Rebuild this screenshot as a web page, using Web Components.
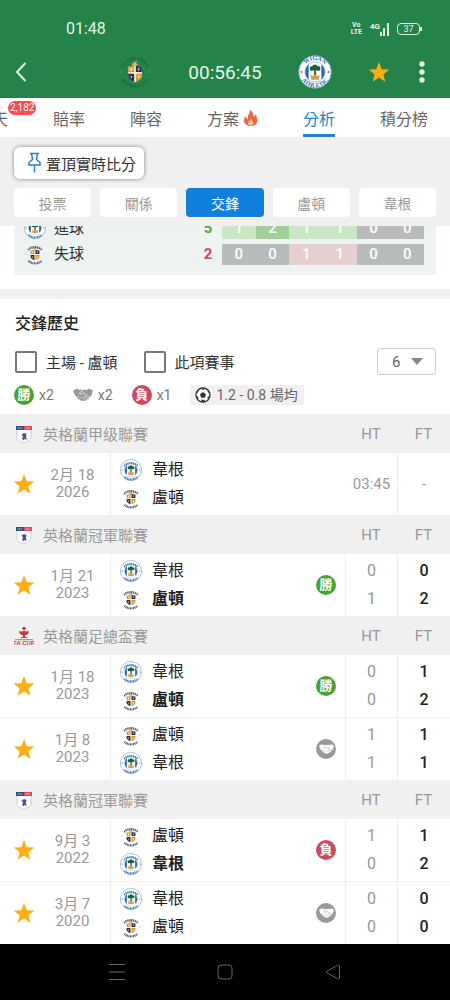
<!DOCTYPE html>
<html lang="zh-Hant">
<head>
<meta charset="utf-8">
<meta name="viewport" content="width=device-width, initial-scale=1">
<title>交鋒歷史</title>
<style>
  body {
    margin: 0;
    min-height: 100vh;
    display: flex;
    flex-direction: column;
    background: #fff;
    color: #333;
    font-family: Roboto, "Noto Sans CJK TC", sans-serif;
    font-size: 15px;
  }
</style>
</head>
<body>
  <status-bar time="01:48" battery="37"></status-bar>
  <match-bar clock="00:56:45"></match-bar>
  <tab-bar>
    <tab-item badge="2,182">天</tab-item>
    <tab-item>賠率</tab-item>
    <tab-item>陣容</tab-item>
    <tab-item hot>方案</tab-item>
    <tab-item active>分析</tab-item>
    <tab-item>積分榜</tab-item>
  </tab-bar>
  <filter-panel>
    <pin-button slot="pin">置頂實時比分</pin-button>
    <filter-chip>投票</filter-chip>
    <filter-chip>關係</filter-chip>
    <filter-chip active>交鋒</filter-chip>
    <filter-chip>盧頓</filter-chip>
    <filter-chip>韋根</filter-chip>
  </filter-panel>
  <goal-stats></goal-stats>
  <history-filters></history-filters>
  <history-summary></history-summary>
  <match-history></match-history>
  <system-nav></system-nav>

<script>
'use strict';

const baseStyle = `
  :host, *, *::before, *::after { box-sizing: border-box; }
  button, select {
    margin: 0;
    padding: 0;
    border: none;
    background: none;
    color: inherit;
    font: inherit;
  }
  button { cursor: pointer; }
  a { color: inherit; text-decoration: none; }
  svg { display: block; }
`;

class BaseElement extends HTMLElement {
  constructor() {
    super();
    this.attachShadow({ mode: 'open' });
  }

  connectedCallback() {
    this.shadowRoot.innerHTML = `<style>${baseStyle}${this.styles()}</style>${this.render()}`;
  }

  styles() { return ''; }
  render() { return '<slot></slot>'; }
}

const starPath = 'M12 1.2l3 7.7 8.2.5-6.4 5.2 2.1 8-6.9-4.5-6.9 4.5 2.1-8L.8 9.4 9 8.9z';

class StarIcon extends BaseElement {
  styles() {
    return `
      :host { display: block; width: 22px; height: 22px; }
      svg { width: 100%; height: 100%; }
    `;
  }
  render() {
    return `<svg viewBox="0 0 24 24"><path d="${starPath}" fill="#ffae16"/></svg>`;
  }
}
customElements.define('star-icon', StarIcon);

// club badges, the ring lettering is only spelled out at the large size
class TeamCrest extends BaseElement {
  styles() {
    return `
      :host { display: block; width: 22px; height: 22px; flex: none; }
      :host([large]) { width: 34px; height: 34px; }
      svg { width: 100%; height: 100%; }
      text { font: bold 7px "Liberation Serif", serif; }
      :host([team="luton"]) text { font-size: 5px; }
    `;
  }
  ring(top, bottom, color) {
    if (!this.hasAttribute('large')) {
      return `
        <g fill="none" stroke="${color}" stroke-width="4" opacity=".85">
          <path d="M7.500 12.500A18 18 0 0 1 32.500 12.500" stroke-dasharray="2.300 1.200"/>
          <path d="M8 32.500A18 18 0 0 0 32 32.500" stroke-dasharray="1.800 1"/>
        </g>`;
    }
    return `
      <path id="t" d="M6.500 15A14.500 14.500 0 0 1 33.500 15" fill="none"/>
      <path id="b" d="M4.500 29.500A18.300 18.300 0 0 0 35.500 29.500" fill="none"/>
      <g fill="${color}" text-anchor="middle">
        <text><textPath href="#t" startOffset="50%">${top}</textPath></text>
        <text><textPath href="#b" startOffset="50%">${bottom}</textPath></text>
      </g>`;
  }
  render() {
    if (this.getAttribute('team') === 'wigan') {
      return `
        <svg viewBox="0 0 40 40" role="img" aria-label="韋根">
          <circle cx="20" cy="20" r="19.300" fill="#fff" stroke="#5e93c6" stroke-width="1"/>
          <circle cx="20" cy="20" r="12" fill="#fff" stroke="#7aa7d3" stroke-width=".8"/>
          <path d="M12.500 11.200a12 12 0 0 0 0 17.600zM27.500 11.200a12 12 0 0 1 0 17.600z" fill="#2667ae"/>
          <path d="M14 17c-1-3 2-4 3-4 1-2 5-2 6 0 3 0 4 2 3 4 0 2-3 2-4 1-1 1-3 1-4 0-2 1-4 1-4-1z" fill="#17643c"/>
          <path d="M19 18h2.200l.5 6h-3.200z" fill="#7a5633"/>
          <path d="M14.500 23l2.500 2 3-2.500 3 2.500 2.500-2-1 6h-9z" fill="#c9a24d"/>
          <circle cx="4" cy="20" r="1.400" fill="#b8893c"/>
          <circle cx="36" cy="20" r="1.400" fill="#b8893c"/>
          ${this.ring('WIGAN', 'ATHLETIC', '#2b61a3')}
        </svg>`;
    }
    return `
      <svg viewBox="0 0 40 40" role="img" aria-label="盧頓">
        <path d="M16 12c1-3 3-4 7-5l-2 3 3 1-3 2z" fill="#d6b65b"/>
        <path d="M12 13.500c3 1 5-1 8-1s5 2 8 1V24c0 4-4 6-8 8-4-2-8-4-8-8z" fill="#f4f0e2"/>
        <path d="M12 13.500c3 1 5-1 7-1V20h-7zM21 22h7v2c0 4-3 5.500-7 7.500z" fill="#d99a35"/>
        <path d="M21 12.500c2 0 5 2 7 1V20h-7zM12 22h7v9.500c-4-2-7-3.500-7-7.500z" fill="#26324d"/>
        <path d="M14 16l3-1v3l-2 1zM23 24l3 1-2 3z" fill="#f6e5bb"/>
        <path d="M23 15l3 1-2 3zM14 24l3 1-1 3z" fill="#e6b36a"/>
        <path d="M1 20h4M35 20h4" stroke="#9aa3b3" stroke-width="1" opacity=".6"/>
        ${this.ring('LUTON TOWN', 'FOOTBALL CLUB', this.hasAttribute('large') ? '#145c4c' : '#2c3a63')}
      </svg>`;
  }
}
customElements.define('team-crest', TeamCrest);

class HandshakeIcon extends BaseElement {
  styles() {
    return `
      :host { display: block; width: 20px; height: 14px; color: #999; }
      svg { width: 100%; height: 100%; }
    `;
  }
  render() {
    return `
      <svg viewBox="0 0 40 26">
        <path d="M0 4L8 0l5 3c3-2 5-1 7 0 3-1 5-2 8 0l4-3 8 4-4 12-4 1c1 3-1 4-3 4-1 3-3 3-5 3-2 2-4 2-6 0-3 1-4-1-5-2-3 0-4-2-4-4L4 14z" fill="currentColor"/>
        <path d="M20 3l-7 6c1 3 4 3 6 1l3-1 10 8M22 14l7 6M19 17l5 5M9 18l3-3M13 21l3-3" fill="none" stroke="var(--cut, #fff)" stroke-width="1.400"/>
      </svg>`;
  }
}
customElements.define('handshake-icon', HandshakeIcon);

const results = {
  win: { text: '勝', color: '#47a136' },
  loss: { text: '負', color: '#ce495f' },
  draw: { text: '', color: '#999' }
};

class ResultBadge extends BaseElement {
  styles() {
    const result = results[this.getAttribute('result')];
    return `
      :host {
        display: flex;
        align-items: center;
        justify-content: center;
        flex: none;
        width: 20px;
        height: 20px;
        border-radius: 50%;
        background: ${result.color};
        color: #fff;
        font-size: 13px;
        font-weight: 700;
        line-height: 20px;
      }
      handshake-icon { width: 15px; height: 10px; color: #fff; --cut: #999; }
    `;
  }
  render() {
    return results[this.getAttribute('result')].text || '<handshake-icon></handshake-icon>';
  }
}
customElements.define('result-badge', ResultBadge);

class StatusBar extends BaseElement {
  styles() {
    return `
      :host {
        display: flex;
        justify-content: space-between;
        height: 46px;
        padding: 18px 28px 6px 66px;
        background: #238348;
        color: #e4f6e6;
        font-size: 16px;
        line-height: 22px;
      }
      .icons { display: flex; align-items: center; gap: 8px; }
      .volte { font-size: 7px; font-weight: 700; line-height: 7px; text-align: center; }
      .volte span { display: block; }
      .signal { display: flex; align-items: center; font-size: 8px; font-weight: 700; line-height: 8px; }
      .signal span { align-self: flex-start; }
      .battery { display: flex; align-items: center; }
      .level {
        width: 23px;
        height: 12px;
        border: 1px solid #e4f6e6;
        border-radius: 4px;
        font-size: 9px;
        line-height: 10px;
        text-align: center;
      }
      .battery::after { content: ""; width: 2px; height: 4px; background: #e4f6e6; }
    `;
  }
  render() {
    return `
      <time>${this.getAttribute('time')}</time>
      <div class="icons">
        <div class="volte"><span>Vo</span><span>LTE</span></div>
        <div class="signal">
          <span>4G</span>
          <svg width="9" height="13" viewBox="0 0 9 13"><path d="M0 9h2v4H0zM3 5h2v8H3zM7 0h2v13H7z" fill="#e4f6e6"/></svg>
        </div>
        <div class="battery"><div class="level">${this.getAttribute('battery')}</div></div>
      </div>`;
  }
}
customElements.define('status-bar', StatusBar);

class MatchBar extends BaseElement {
  styles() {
    return `
      :host {
        display: grid;
        grid-template-columns: minmax(0, 138px) auto 152px;
        justify-content: space-between;
        align-items: center;
        height: 52px;
        padding-left: 14px;
        background: #238348;
        color: #e4f6e6;
        font-size: 19px;
      }
      .side { display: flex; align-items: center; }
      .home { justify-content: space-between; }
      .away { gap: 36px; }
      .more { margin-left: -8px; }
    `;
  }
  render() {
    return `
      <div class="side home">
        <button aria-label="返回"><svg width="14" height="22" viewBox="0 0 14 22"><path d="M11.500 2L3 11l8.500 9" fill="none" stroke="#e4f6e6" stroke-width="2"/></svg></button>
        <team-crest team="luton" large></team-crest>
      </div>
      <time>${this.getAttribute('clock')}</time>
      <div class="side away">
        <team-crest team="wigan" large></team-crest>
        <button aria-label="收藏"><star-icon></star-icon></button>
        <button class="more" aria-label="更多"><svg width="8" height="24" viewBox="0 0 8 24"><g fill="#e4f6e6"><circle cx="4" cy="4" r="2.700"/><circle cx="4" cy="12" r="2.700"/><circle cx="4" cy="20" r="2.700"/></g></svg></button>
      </div>`;
  }
}
customElements.define('match-bar', MatchBar);

class TabBar extends BaseElement {
  styles() {
    return `
      :host {
        display: flex;
        justify-content: flex-end;
        gap: 45px;
        height: 39px;
        padding: 0 22px;
        overflow: hidden;
        background: #fff;
      }
    `;
  }
}
customElements.define('tab-bar', TabBar);

class TabItem extends BaseElement {
  styles() {
    return `
      :host { display: block; flex: none; position: relative; color: #666; font-size: 16px; }
      a {
        display: flex;
        align-items: center;
        gap: 4px;
        height: 39px;
        padding-top: 3px;
        border-bottom: 3px solid transparent;
        white-space: nowrap;
      }
      :host([active]) a { color: #2b7fca; border-color: #2b7fca; }
      .badge {
        position: absolute;
        left: 100%;
        top: 3px;
        padding: 0 2px;
        border-radius: 7px;
        background: #fb4a50;
        color: #fff;
        font-size: 10px;
        line-height: 14px;
      }
    `;
  }
  render() {
    const flame = `<svg width="15" height="18" viewBox="0 0 15 18">
      <path d="M7 1c4 3 3 5 4 7 1-1 1-2 1-3 4 5 3 12-4 12S-1 11 3 7c0 2 1 3 2 3C4 6 7 5 7 1z" fill="#ec6741"/>
      <path d="M8 9c0 3 3 3 2 6-1 2-5 2-5-1 0-2 3-3 3-5z" fill="#ffc6a0"/></svg>`;
    const badge = this.getAttribute('badge');
    return `
      <a href="#"><slot></slot>${this.hasAttribute('hot') ? flame : ''}</a>
      ${badge ? `<span class="badge">${badge}</span>` : ''}`;
  }
}
customElements.define('tab-item', TabItem);

class FilterPanel extends BaseElement {
  styles() {
    return `
      :host { display: block; padding: 10px 14px 9px; background: #f0f0f0; }
      .chips { display: grid; grid-template-columns: repeat(5, 1fr); gap: 9px; margin-top: 9px; }
    `;
  }
  render() {
    return '<slot name="pin"></slot><div class="chips"><slot></slot></div>';
  }
}
customElements.define('filter-panel', FilterPanel);

class PinButton extends BaseElement {
  styles() {
    return `
      :host { display: flex; }
      button {
        display: flex;
        align-items: center;
        gap: 4px;
        height: 32px;
        padding: 0 8px 0 13px;
        border-radius: 6px;
        background: #fff;
        box-shadow: 0 0 4px rgba(0, 0, 0, .45);
        color: #333;
        font-size: 15px;
      }
    `;
  }
  render() {
    return `<button>
      <svg width="15" height="22" viewBox="0 0 15 22"><path d="M3 1.500h9M4.500 1.500l1 6-3.500 3v2.500h11v-2.500l-3.500-3 1-6M7.500 13v7.500" fill="none" stroke="#2b7fca" stroke-width="1.500"/></svg>
      <slot></slot></button>`;
  }
}
customElements.define('pin-button', PinButton);

class FilterChip extends BaseElement {
  styles() {
    return `
      :host { display: block; }
      button {
        width: 100%;
        height: 29px;
        border-radius: 4px;
        background: #fff;
        color: #999;
        font-size: 14px;
      }
      :host([active]) button { background: #1080dc; color: #fff; }
    `;
  }
  render() {
    return '<button><slot></slot></button>';
  }
}
customElements.define('filter-chip', FilterChip);

const goalRows = [
  { team: 'wigan', name: '進球', total: 5, tone: 'for', cells: [1, 2, 1, 1, 0, 0] },
  { team: 'luton', name: '失球', total: 2, tone: 'against', cells: [0, 0, 1, 1, 0, 0] }
];

class GoalStats extends BaseElement {
  styles() {
    return `
      :host { display: block; padding: 0 14px 14px; border-bottom: 10px solid #f0f0f0; }
      .view {
        display: flex;
        flex-direction: column;
        justify-content: flex-end;
        height: 49px;
        padding: 0 12px 8px 10px;
        overflow: hidden;
        border-radius: 0 0 4px 4px;
        background: #edf3f0;
      }
      table { width: 100%; table-layout: fixed; border-spacing: 0; flex: none; }
      th, td { height: 26px; padding: 0; font-size: 15px; line-height: 21px; text-align: center; }
      th { width: 170px; font-weight: 400; }
      .name { display: flex; align-items: center; gap: 8px; }
      .total { width: 28px; }
      .for .total { color: #55a845; font-weight: 700; }
      .against .total { color: #d04560; font-weight: 700; }
      td span { display: block; background: #b9bbba; color: #fff; font-weight: 500; }
      .for .g1 { background: #cae6c4; }
      .for .g2 { background: #9fd197; }
      .against .g1 { background: #e6cfd1; }
    `;
  }
  render() {
    const rows = goalRows.map(row => `
      <tr class="${row.tone}">
        <th scope="row"><div class="name"><team-crest team="${row.team}"></team-crest>${row.name}</div></th>
        <td class="total">${row.total}</td>
        ${row.cells.map(n => `<td><span class="g${n}">${n}</span></td>`).join('')}
      </tr>`).join('');
    return `<div class="view"><table>${rows}</table></div>`;
  }
}
customElements.define('goal-stats', GoalStats);

class HistoryFilters extends BaseElement {
  styles() {
    return `
      :host { display: block; padding: 13px 14px 0 15px; }
      h2 { margin: 0; font-size: 16px; font-weight: 500; line-height: 24px; color: #222; }
      .row { display: flex; align-items: center; gap: 26px; margin-top: 12px; }
      label { display: flex; align-items: center; gap: 9px; }
      input {
        appearance: none;
        width: 22px;
        height: 22px;
        margin: 0;
        border: 2px solid #777;
        border-radius: 2px;
      }
      input:checked { background: #1080dc; }
      .count {
        display: grid;
        align-items: center;
        width: 59px;
        height: 27px;
        margin-left: auto;
        border: 1px solid #ccc;
        border-radius: 3px;
        color: #666;
      }
      .count > * { grid-area: 1 / 1; }
      select { appearance: none; width: 100%; padding-left: 14px; }
      svg { justify-self: end; margin-right: 12px; pointer-events: none; }
    `;
  }
  render() {
    return `
      <h2>交鋒歷史</h2>
      <div class="row">
        <label><input type="checkbox">主場 - 盧頓</label>
        <label><input type="checkbox">此項賽事</label>
        <div class="count">
          <select aria-label="場數"><option>6</option></select>
          <svg width="12" height="7" viewBox="0 0 12 7"><path d="M0 0h12L6 7z" fill="#888"/></svg>
        </div>
      </div>`;
  }
}
customElements.define('history-filters', HistoryFilters);

class HistorySummary extends BaseElement {
  styles() {
    return `
      :host {
        display: flex;
        align-items: center;
        gap: 19px;
        padding: 10px 14px 9px;
        color: #777;
        font-size: 14px;
        line-height: 20px;
      }
      .item { display: flex; align-items: center; gap: 5px; }
      .average { padding: 0 6px 0 5px; background: #f0f0f0; color: #666; }
    `;
  }
  render() {
    return `
      <div class="item"><result-badge result="win"></result-badge>x2</div>
      <div class="item"><handshake-icon></handshake-icon>x2</div>
      <div class="item"><result-badge result="loss"></result-badge>x1</div>
      <div class="item average">
        <svg width="16" height="16" viewBox="0 0 16 16">
          <circle cx="8" cy="8" r="7" fill="#fff" stroke="#333" stroke-width="1.300"/>
          <path d="M8 5l3 2.200-1.100 3.500H6.100L5 7.200zM5.500 1.500L8 3l2.500-1.500zM1 7l1.800-1.500L4 3 2 4.500zM15 7l-1.800-1.500L12 3l2 1.500zM3 12.500l.5-2.500L1.500 9zM13 12.500l-.5-2.500 2-1zM6 14.700l.5-2h3l.5 2z" fill="#333"/>
        </svg>1.2 - 0.8 場均
      </div>`;
  }
}
customElements.define('history-summary', HistorySummary);

class LeagueLogo extends BaseElement {
  styles() {
    return `
      :host { display: block; width: 20px; height: 20px; flex: none; }
      text { font: bold 6px "Liberation Sans", sans-serif; }
    `;
  }
  render() {
    if (this.getAttribute('league') === 'facup') {
      return `<svg width="20" height="20" viewBox="0 0 20 20" fill="#cf3340">
        <circle cx="10" cy="2.500" r="1.700"/>
        <path d="M6 4.500c-1.500 2 0 4 2 4.500h4c2-.5 3.500-2.500 2-4.500-1 1.500-2 1.500-2.500.5h-3C8 6 7 6 6 4.500zM9 9h2v2h2v1H7v-1h2z"/>
        <path d="M1 13h18v1.200H1z" opacity=".6"/>
        <text x="10" y="19" text-anchor="middle">FA CUP</text>
      </svg>`;
    }
    return `<svg width="20" height="20" viewBox="0 0 20 20">
      <path d="M3 5h14v9c0 2.500-4 3.500-7 5-3-1.500-7-2.500-7-5z" fill="#fff" stroke="#b6bdca" stroke-width=".7"/>
      <path d="M2 2h8v4H2z" fill="#344d80"/><path d="M10 2h8v4h-8z" fill="#df4656"/>
      <path d="M3.500 4h5M11.500 4h5" stroke="#fff" stroke-width=".8" stroke-dasharray="1 .6"/>
      <path d="M10 9l2.500 1-.5 3 .8 3-2-1-1.800 1.500-.8-2.500.8-1.500-1.500-2z" fill="#4c5689"/>
    </svg>`;
  }
}
customElements.define('league-logo', LeagueLogo);

const teamNames = { wigan: '韋根', luton: '盧頓' };

const leagues = [
  { logo: 'efl', name: '英格蘭甲级聯賽', matches: [
    { date: ['2月 18', '2026'], teams: ['wigan', 'luton'], kickoff: '03:45' }
  ] },
  { logo: 'efl', name: '英格蘭冠軍聯賽', matches: [
    { date: ['1月 21', '2023'], teams: ['wigan', 'luton'], ht: [0, 1], ft: [0, 2], result: 'win' }
  ] },
  { logo: 'facup', name: '英格蘭足總盃賽', matches: [
    { date: ['1月 18', '2023'], teams: ['wigan', 'luton'], ht: [0, 0], ft: [1, 2], result: 'win' },
    { date: ['1月 8', '2023'], teams: ['luton', 'wigan'], ht: [1, 1], ft: [1, 1], result: 'draw' }
  ] },
  { logo: 'efl', name: '英格蘭冠軍聯賽', matches: [
    { date: ['9月 3', '2022'], teams: ['luton', 'wigan'], ht: [1, 0], ft: [1, 2], result: 'loss' },
    { date: ['3月 7', '2020'], teams: ['wigan', 'luton'], ht: [0, 0], ft: [0, 0], result: 'draw' }
  ] }
];

class MatchHistory extends BaseElement {
  styles() {
    return `
      :host { display: block; }
      table { width: 100%; table-layout: fixed; border-spacing: 0; }
      .c-date { width: 110px; }
      .c-ht { width: 52px; }
      .c-ft { width: 53px; }
      th, td { padding: 0; text-align: center; font-weight: 400; }
      th { height: 39px; background: #f0f0f0; color: #999; }
      .league { display: flex; align-items: center; gap: 9px; padding-left: 14px; }
      td { height: 62px; color: #999; }
      td + td { border-left: 1px solid #eee; }
      td.open { border-left-color: transparent; }
      .match + .match td { height: 63px; border-top: 1px solid #f0f0f0; }
      .when { display: flex; align-items: center; padding-left: 13px; }
      .when time { flex: 1; line-height: 17px; }
      .when time span, .score span { display: block; }
      .pair { display: flex; align-items: center; justify-content: space-between; padding: 0 9px; }
      .team {
        display: flex;
        align-items: center;
        gap: 10px;
        height: 28px;
        color: #222;
        font-size: 16px;
        line-height: 24px;
      }
      .winner { font-weight: 700; }
      .score { font-size: 16px; line-height: 28px; }
      .ft { color: #222; font-weight: 500; }
    `;
  }
  row(match) {
    const { date, teams, ht, ft } = match;
    const isWinner = i => ft && ft[i] > ft[1 - i];
    const names = teams.map((team, i) => `
      <div class="team${isWinner(i) ? ' winner' : ''}"><team-crest team="${team}"></team-crest>${teamNames[team]}</div>`).join('');
    const score = pair => pair.map(n => `<span>${n}</span>`).join('');
    return `
      <tr class="match">
        <td><div class="when"><button aria-label="收藏"><star-icon></star-icon></button><time><span>${date[0]}</span><span>${date[1]}</span></time></div></td>
        <td><div class="pair"><div>${names}</div>${match.result ? `<result-badge result="${match.result}"></result-badge>` : ''}</div></td>
        ${ht
          ? `<td class="score">${score(ht)}</td><td class="score ft">${score(ft)}</td>`
          : `<td class="open">${match.kickoff}</td><td>-</td>`}
      </tr>`;
  }
  render() {
    const groups = leagues.map(league => `
      <tbody>
        <tr>
          <th colspan="2" scope="rowgroup"><div class="league"><league-logo league="${league.logo}"></league-logo>${league.name}</div></th>
          <th>HT</th>
          <th>FT</th>
        </tr>
        ${league.matches.map(match => this.row(match)).join('')}
      </tbody>`).join('');
    return `
      <table>
        <colgroup><col class="c-date"><col><col class="c-ht"><col class="c-ft"></colgroup>
        ${groups}
      </table>`;
  }
}
customElements.define('match-history', MatchHistory);

class SystemNav extends BaseElement {
  styles() {
    return `
      :host {
        display: flex;
        flex: 1 0 55px;
        align-items: center;
        justify-content: center;
        background: #000;
      }
      button { display: flex; justify-content: center; width: 24%; }
      svg { fill: none; stroke: #666; stroke-width: 1; }
    `;
  }
  render() {
    return `
      <button aria-label="最近"><svg width="16" height="16" viewBox="0 0 16 16"><path d="M0 .5h16M0 8h16M0 15.500h16"/></svg></button>
      <button aria-label="主頁"><svg width="16" height="16" viewBox="0 0 16 16"><rect x="1" y="1" width="14" height="14" rx="3"/></svg></button>
      <button aria-label="返回"><svg width="16" height="16" viewBox="0 0 16 16"><path d="M14.500 2v12c0 1-1 1-2 .6L2 9c-1-.6-1-1.400 0-2l10.500-5.600c1-.4 2-.4 2 .6z"/></svg></button>`;
  }
}
customElements.define('system-nav', SystemNav);
</script>
</body>
</html>
